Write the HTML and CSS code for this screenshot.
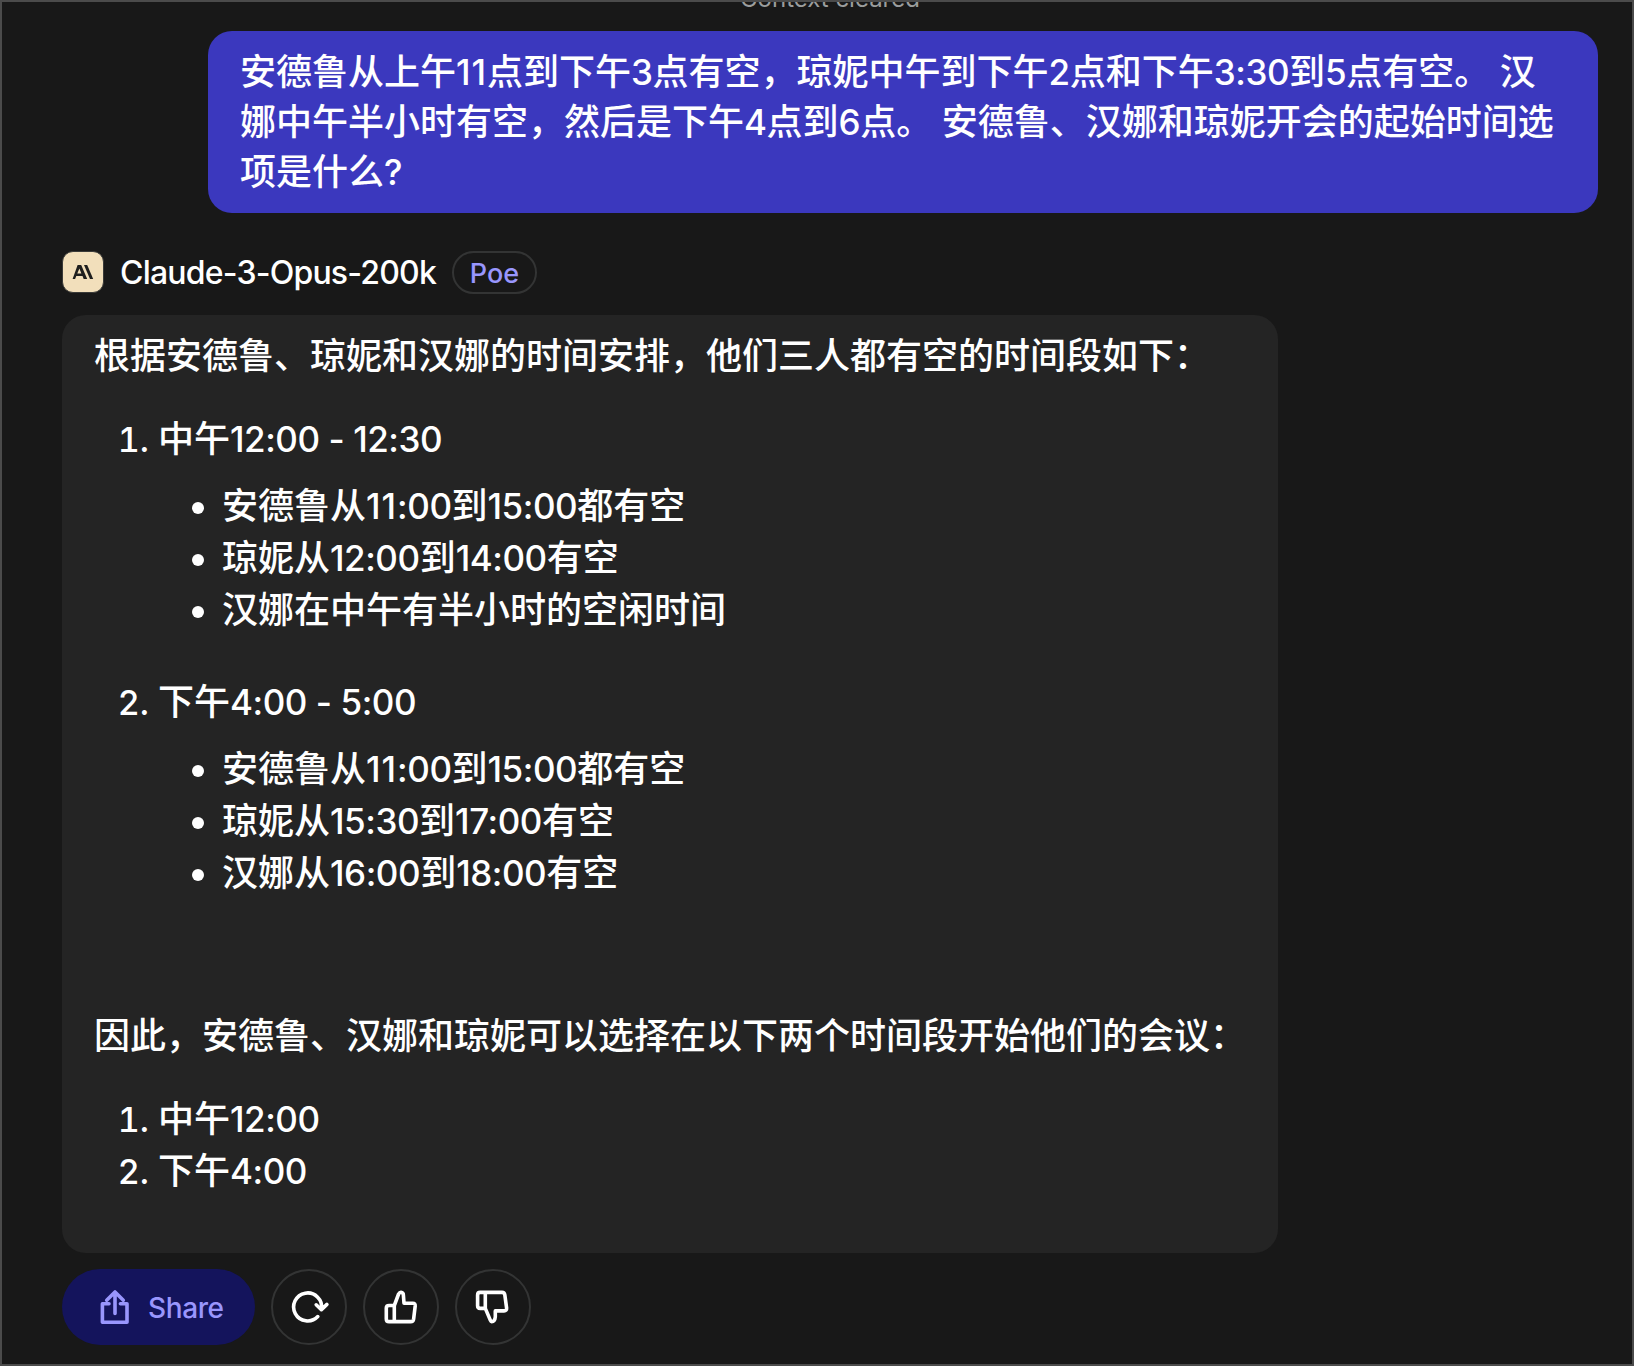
FILE: index.html
```html
<!DOCTYPE html>
<html lang="zh-CN">
<head>
    <meta charset="utf-8" />
    <title>Claude-3-Opus-200k - Poe</title>

    <link rel="stylesheet" href="styles.css">
</head>
<body>

    <main class="chat">
        <div class="context-break">Context cleared</div>

        <div class="bubble bubble--human">安德鲁从上午<span class="n n--wide">11</span>点到下午<span class="n">3</span>点有空，琼妮中午到下午<span class="n">2</span>点和下午<span class="n">3:30</span>到<span class="n">5</span>点有空。 汉<br>娜中午半小时有空，然后是下午<span class="n">4</span>点到<span class="n">6</span>点。 安德鲁、汉娜和琼妮开会的起始时间选<br>项是什么<span class="n">?</span></div>

        <header class="bot-header">
            <div class="avatar">
                <svg width="40" height="40" viewBox="0 0 40 40">
                    <path fill="#1f1f1e" fill-rule="evenodd" d="M14.6 13h3.6l6 14h-3.5l-1.2-3h-6.2l-1.2 3H9.6zM16.4 16.6l-2.1 4.9h4.1z" />
                    <path fill="#1f1f1e" d="M21 13h3.2l6 14H27z" />
                </svg>
            </div>
            <div class="bot-name">Claude-3-Opus-200k</div>
            <div class="tag">Poe</div>
        </header>

        <div class="bubble bubble--bot">
            <p>根据安德鲁、琼妮和汉娜的时间安排，他们三人都有空的时间段如下：</p>
            <ol class="slots">
                <li>
                    中午<span class="n">12:00 - 12:30</span>
                    <ul>
                        <li>安德鲁从<span class="n n--wide">11</span><span class="n">:00</span>到<span class="n">15:00</span>都有空</li>
                        <li>琼妮从<span class="n">12:00</span>到<span class="n">14:00</span>有空</li>
                        <li>汉娜在中午有半小时的空闲时间</li>
                    </ul>
                </li>
                <li>
                    下午<span class="n">4:00 - 5:00</span>
                    <ul>
                        <li>安德鲁从<span class="n n--wide">11</span><span class="n">:00</span>到<span class="n">15:00</span>都有空</li>
                        <li>琼妮从<span class="n">15:30</span>到<span class="n">17:00</span>有空</li>
                        <li>汉娜从<span class="n">16:00</span>到<span class="n">18:00</span>有空</li>
                    </ul>
                </li>
            </ol>
            <p>因此，安德鲁、汉娜和琼妮可以选择在以下两个时间段开始他们的会议：</p>
            <ol class="result">
                <li>中午<span class="n">12:00</span></li>
                <li>下午<span class="n">4:00</span></li>
            </ol>
        </div>

        <div class="actions">
            <button class="btn-share">
                <svg width="30" height="36" viewBox="0 0 30 36">
                    <path d="M9 14.7H2.4v18.6H27V14.7h-6.6M15 24.5V3.5M6.7 11.2 15 3l8.3 8.2" />
                </svg>
                <span>Share</span>
            </button>
            <button class="btn-round" aria-label="Retry">
                <svg width="76" height="76" viewBox="0 0 76 76">
                    <path d="M46.8 47.6A14 14 0 1 1 50.5 40M45.2 35.8l5.2 4.9 5.5-5.3" />
                </svg>
            </button>
            <button class="btn-round" aria-label="Like">
                <svg width="76" height="76" viewBox="0 0 76 76">
                    <path d="M31.3 36.5 35.6 25q.9-1.7 2.3-1.7 2.5.3 2.5 3L41 34.2h8.8q2.6 0 2.4 2.8l-1.6 13.2q-.4 2.4-2.8 2.4H26q-2.7 0-2.7-2.7V39q0-2.5 2.7-2.5h5.3v16" />
                </svg>
            </button>
            <button class="btn-round" aria-label="Dislike">
                <svg width="76" height="76" viewBox="0 0 76 76">
                    <path d="M30.3 39.4H25.2q-2.6 0-2.6-2.6V26q0-2.6 2.6-2.6H47q2.4 0 2.8 2.4l1.8 13.2q.2 2.9-2.5 2.9H40.3v5.9q-.4 4.7-3.7 4.8-.7 0-1.2-1.2l-5.1-12v-16" />
                </svg>
            </button>
        </div>
    </main>

</body>
</html>
```
FILE: styles.css
```css
:root{
    --bg:#181818;
    --bot-bg:#242424;
    --human-bg:#3b38be;
    --line:#333434;
    --accent:#9996fd;
}
*{
    box-sizing:border-box;
}
body{
    margin:0;
    background:var(--bg);
    color:#fff;
    font-family:Inter,"Noto Sans CJK SC",sans-serif;
    font-size:36px;
    font-weight:500;
    line-height:50px;
}
.chat{
    height:1366px;
    padding:0 34px 0 60px;
    border:2px solid #4b4b4b;
    overflow:hidden;
}
.context-break{
    height:30px;
    margin-top:-18px;
    margin-bottom:17px;
    font-size:24px;
    font-weight:400;
    line-height:30px;
    text-align:center;
    color:#9b9d9d;
}
.bubble{
    border-radius:24px;
    padding:16px 32px;
}
.bubble--human{
    margin-left:146px;
    height:182px;
    background:var(--human-bg);
    white-space:nowrap;
}
.n{
    font-size:35px;
    line-height:0;
    letter-spacing:-.45px;
}
.n--wide{
    letter-spacing:1px;
}
.bot-header{
    display:flex;
    align-items:center;
    height:43px;
    margin-top:38px;
}
.avatar{
    width:42px;
    height:42px;
    margin-bottom:2px;
    border:1px solid #3a3a38;
    border-radius:11px;
    background:#f2dfbb;
    overflow:hidden;
}
.avatar svg{
    display:block;
}
.bot-name{
    margin-left:16px;
    width:332px;
    font-size:32px;
    letter-spacing:-.8px;
}
.tag{
    height:43px;
    width:85px;
    border:2px solid var(--line);
    border-radius:22px;
    font-size:27px;
    line-height:41px;
    text-align:center;
    color:var(--accent);
}
.bubble--bot{
    width:1216px;
    height:938px;
    margin-top:21px;
    background:var(--bot-bg);
}
.bubble p{
    margin:0 0 32px;
    white-space:nowrap;
}
.bubble ol,
.bubble ul{
    margin:0;
    padding-left:64px;
}
.bubble ul{
    margin-top:15px;
    list-style:disc;
}
.bubble li{
    line-height:52px;
}
.bubble ol > li::marker{
    font-size:34px;
}
.slots > li{
    margin-bottom:40px;
}
.slots + p{
    margin-top:112px;
}
.actions{
    display:flex;
    gap:16px;
    margin-top:16px;
}
.actions button{
    height:76px;
    padding:0;
    font-family:inherit;
    font-weight:inherit;
    color:#fff;
    background:none;
}
.actions svg{
    fill:none;
    stroke:currentColor;
    stroke-width:3.6;
    stroke-linecap:round;
    stroke-linejoin:round;
}
.actions .btn-share{
    display:flex;
    align-items:center;
    gap:18px;
    width:193px;
    padding-left:38px;
    border:none;
    border-radius:38px;
    background:#14145c;
    color:var(--accent);
    font-size:28px;
    letter-spacing:-.4px;
}
.btn-share span{
    padding-top:2px;
}
.actions .btn-round{
    width:76px;
    border:2px solid var(--line);
    border-radius:50%;
}
.btn-round svg{
    display:block;
    margin:-2px;
}
```
